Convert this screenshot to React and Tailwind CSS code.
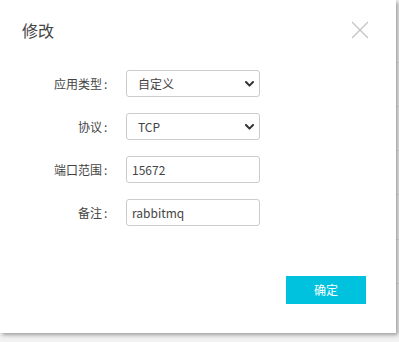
import { X } from "lucide-react";

const font = { fontFamily: '"Noto Sans CJK SC", "Noto Sans", sans-serif' };

const Chevron = () => (
  <svg width="9" height="6" viewBox="0 0 9 6" fill="none">
    <polyline points="1,1 4.5,4.6 8,1" stroke="#333" strokeWidth="2" strokeLinecap="round" strokeLinejoin="round" />
  </svg>
);

const Select = ({ value }) => (
  <div className="w-[134px] h-[27px] border border-[#cccccc] rounded-[3px] bg-white flex items-center justify-between pl-[11px] pr-[5px] text-[12px] text-[#444]">
    <span>{value}</span>
    <Chevron />
  </div>
);

const Input = ({ value }) => (
  <div className="w-[134px] h-[27px] border border-[#cccccc] rounded-[3px] bg-white flex items-center px-[5px] text-[12px] text-[#444]">
    {value}
  </div>
);

const Row = ({ label, children }) => (
  <div className="flex items-center">
    <div className="w-[114px] flex justify-end items-center text-[12px] text-[#444]">
      <span>{label}</span>
      <span className="ml-[2px] w-[10px]">:</span>
    </div>
    <div className="ml-[12px]">{children}</div>
  </div>
);

const App = () => {
  return (
    <div className="w-[399px] h-[342px] bg-[#f2f2f2] overflow-hidden relative" style={font}>
      {/* faint table lines behind dialog */}
      <div className="absolute right-0 top-0 w-[10px] h-full">
        {[62, 106, 150, 194, 239, 283].map((y) => (
          <div key={y} className="absolute left-0 w-full h-px bg-[#e2e2e2]" style={{ top: y }} />
        ))}
      </div>
      <div className="relative w-[396px] h-[333px] bg-white shadow-[2px_2px_4px_rgba(0,0,0,0.35)] flex flex-col">
        <div className="flex items-center justify-between pl-[22px] pr-[21px] pt-[15px]">
          <h2 className="text-[16px] text-[#444] leading-[30px]">修改</h2>
          <X className="w-[30px] h-[30px] text-[#c4c4c4]" strokeWidth={1} />
        </div>
        <div className="flex flex-col gap-[16px] mt-[25px]">
          <Row label="应用类型">
            <Select value="自定义" />
          </Row>
          <Row label="协议">
            <Select value="TCP" />
          </Row>
          <Row label="端口范围">
            <Input value="15672" />
          </Row>
          <Row label="备注">
            <Input value="rabbitmq" />
          </Row>
        </div>
        <div className="flex justify-end pr-[30px] mt-[50px]">
          <button className="w-[80px] h-[28px] bg-[#00c1de] text-white text-[12px]">确定</button>
        </div>
      </div>
    </div>
  );
};

export default App;
